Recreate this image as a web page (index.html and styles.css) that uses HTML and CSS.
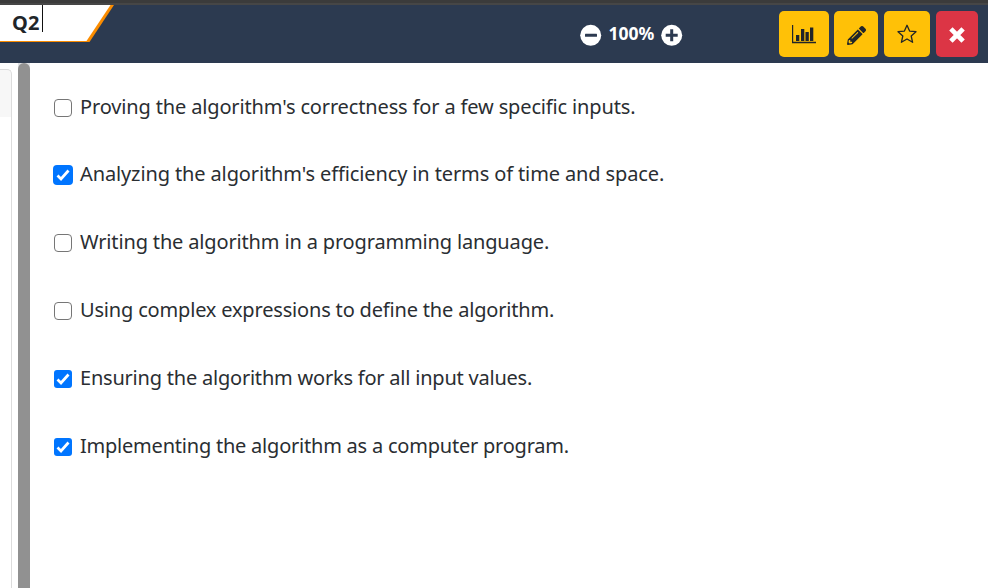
FILE: index.html
```html
<!DOCTYPE html>
<html lang="en">
<head>
<meta charset="utf-8">
<title>Q2</title>
<link rel="stylesheet" href="styles.css">
</head>
<body>
<header class="topbar">
  <div class="tab"><svg class="tab-shape" width="114" height="37" viewBox="0 0 114 37"><path fill="#fb8c00" d="M0 0H114L89.500 37H0Z"/><path fill="#fff" d="M0 0H110.500L86.500 36H0Z"/></svg><span class="tab-label">Q2</span></div>
  <div class="zoom">
    <svg width="22" height="22" viewBox="0 0 22 22"><circle cx="10.700" cy="11.300" r="10.500" fill="#fff"/><rect x="5" y="9.700" width="12" height="3" rx=".5" fill="#2c3a50"/></svg>
    <span class="zoom-value">100%</span>
    <svg width="22" height="22" viewBox="0 0 22 22"><circle cx="10.700" cy="11.300" r="10.500" fill="#fff"/><path d="M4.700 11.300H16.700M10.700 5.300V17.300" stroke="#2c3a50" stroke-width="3"/></svg>
  </div>
  <div class="actions">
    <button class="btn stats" aria-label="Statistics"><svg width="24" height="19" viewBox="0 0 24 19"><path d="M.5 0V17.500H24" fill="none" stroke="#212529" stroke-width="1.400"/><path fill="#212529" d="M4 10h3.300v6H4zM9 4h3.300v12H9zM13.500 7h3.300v9h-3.300zM18 2.500h3.300v13.500h-3.300z"/></svg></button>
    <button class="btn edit" aria-label="Edit"><svg width="19" height="19" viewBox="0 0 512 512"><path fill="#212529" d="M498 142l-46 46c-5 5-13 5-17 0L324 77c-5-5-5-12 0-17l46-46c19-19 49-19 68 0l60 60c19 19 19 49 0 68zm-214-42L22 362 0 484c-3 16 12 30 28 28l122-22 262-262c5-5 5-13 0-17L301 100c-4-5-12-5-17 0zM124 340c-5-6-5-14 0-20l154-154c6-5 14-5 20 0s5 14 0 20L144 340c-6 5-14 5-20 0zm-36 84h48v36l-64 12-32-31 12-65h36v48z"/></svg></button>
    <button class="btn star" aria-label="Favorite"><svg width="20" height="20" viewBox="0 0 20 20"><path d="M10 1.300L12.600 7.100L19 7.700L14.200 12L15.600 18.300L10 15L4.400 18.300L5.800 12L1 7.700L7.400 7.100Z" fill="none" stroke="#212529" stroke-width="1.300" stroke-linejoin="round"/></svg></button>
    <button class="btn close" aria-label="Close"><svg width="16" height="16" viewBox="0 0 16 16"><path d="M3.600 3.600L12.400 12.400M12.400 3.600L3.600 12.400" stroke="#fff" stroke-width="4.800" stroke-linecap="square"/></svg></button>
  </div>
</header>
<main class="content">
  <aside class="side"><div class="side-head"></div></aside>
  <div class="divider"><div class="thumb"></div></div>
  <section class="options">
    <label class="option"><span class="box"></span><span class="t1">Proving the algorithm's correctness for a few specific inputs.</span></label>
    <label class="option"><span class="box checked focus"><svg viewBox="0 0 18 18"><path d="M3.500 9.500L7 13L14.500 4.500"/></svg></span><span class="t2">Analyzing the algorithm's efficiency in terms of time and space.</span></label>
    <label class="option"><span class="box"></span><span class="t3">Writing the algorithm in a programming language.</span></label>
    <label class="option"><span class="box"></span><span class="t4">Using complex expressions to define the algorithm.</span></label>
    <label class="option"><span class="box checked"><svg viewBox="0 0 18 18"><path d="M3.500 9.500L7 13L14.500 4.500"/></svg></span><span class="t5">Ensuring the algorithm works for all input values.</span></label>
    <label class="option"><span class="box checked"><svg viewBox="0 0 18 18"><path d="M3.500 9.500L7 13L14.500 4.500"/></svg></span><span class="t6">Implementing the algorithm as a computer program.</span></label>
  </section>
</main>
</body>
</html>
```
FILE: styles.css
```css
* { box-sizing: border-box; }
body { margin: 0; height: 588px; overflow: hidden; background: #fff; color: #212529; font-family: "Noto Sans", "Open Sans", sans-serif; }
svg { display: block; flex: none; }
.topbar { height: 63px; display: flex; align-items: flex-start; background: #2c3a50; border-top: 3px solid #3b3b3b; box-shadow: inset 0 2px #464646; padding-top: 2px; }
.tab { position: relative; width: 114px; height: 37px; margin-right: 466px; flex: none; }
.tab-shape { position: absolute; left: 0; top: 0; }
.tab-label { position: relative; display: block; width: 43px; height: 27px; padding-left: 12px; border-right: 1px solid #111; font-size: 20px; font-weight: 700; line-height: 36px; letter-spacing: .3px; }
.zoom { display: flex; align-items: center; height: 22px; margin-top: 19px; width: 103px; justify-content: space-between; }
.zoom-value { color: #fff; font-size: 17.5px; font-weight: 700; line-height: 22px; position: relative; top: -2px; letter-spacing: 0; }
.actions { display: flex; gap: 5px; margin-top: 6px; margin-left: 96px; }
.btn { display: flex; align-items: center; justify-content: center; height: 46px; padding: 0; border: 0; border-radius: 5px; background: #ffc107; flex: none; }
.stats { width: 50px; }
.edit { width: 44px; padding-top: 2px; }
.star { width: 46px; margin-left: 1px; }
.close { width: 42px; margin-left: 1px; background: #dc3545; padding-top: 2px; }
.content { display: flex; height: 525px; }
.side { width: 18px; padding-top: 6px; }
.side-head { width: 12px; height: 519px; border: 1px solid #dcdcdc; border-left: 0; border-bottom: 0; border-top-right-radius: 5px; background: linear-gradient(#f7f7f7 47px, #fff 47px); }
.divider { width: 12px; background: #dfe1e5; }
.thumb { height: 531px; border-radius: 6px; background: #919191; }
.options { padding: 9.8px 0 0 23.5px; }
.option { display: flex; align-items: center; height: 67.8px; gap: 8.5px; font-size: 20px; line-height: 28px; white-space: nowrap; color: #2a2e32; }
.box { width: 18px; height: 18px; border: 1.5px solid #767676; border-radius: 4px; position: relative; top: 1px; flex: none; }
.checked { border: 0; border-radius: 3px; background: #0075ff; }
.focus { box-shadow: 0 0 0 1px #0075ff; }
.checked path { fill: none; stroke: #fff; stroke-width: 2.7; }
.t1 { letter-spacing: -.145px; }
.t2 { letter-spacing: -.12px; }
.t3 { letter-spacing: -.155px; }
.t4 { letter-spacing: -.177px; }
.t5 { letter-spacing: -.215px; }
.t6 { letter-spacing: -.22px; }
```
